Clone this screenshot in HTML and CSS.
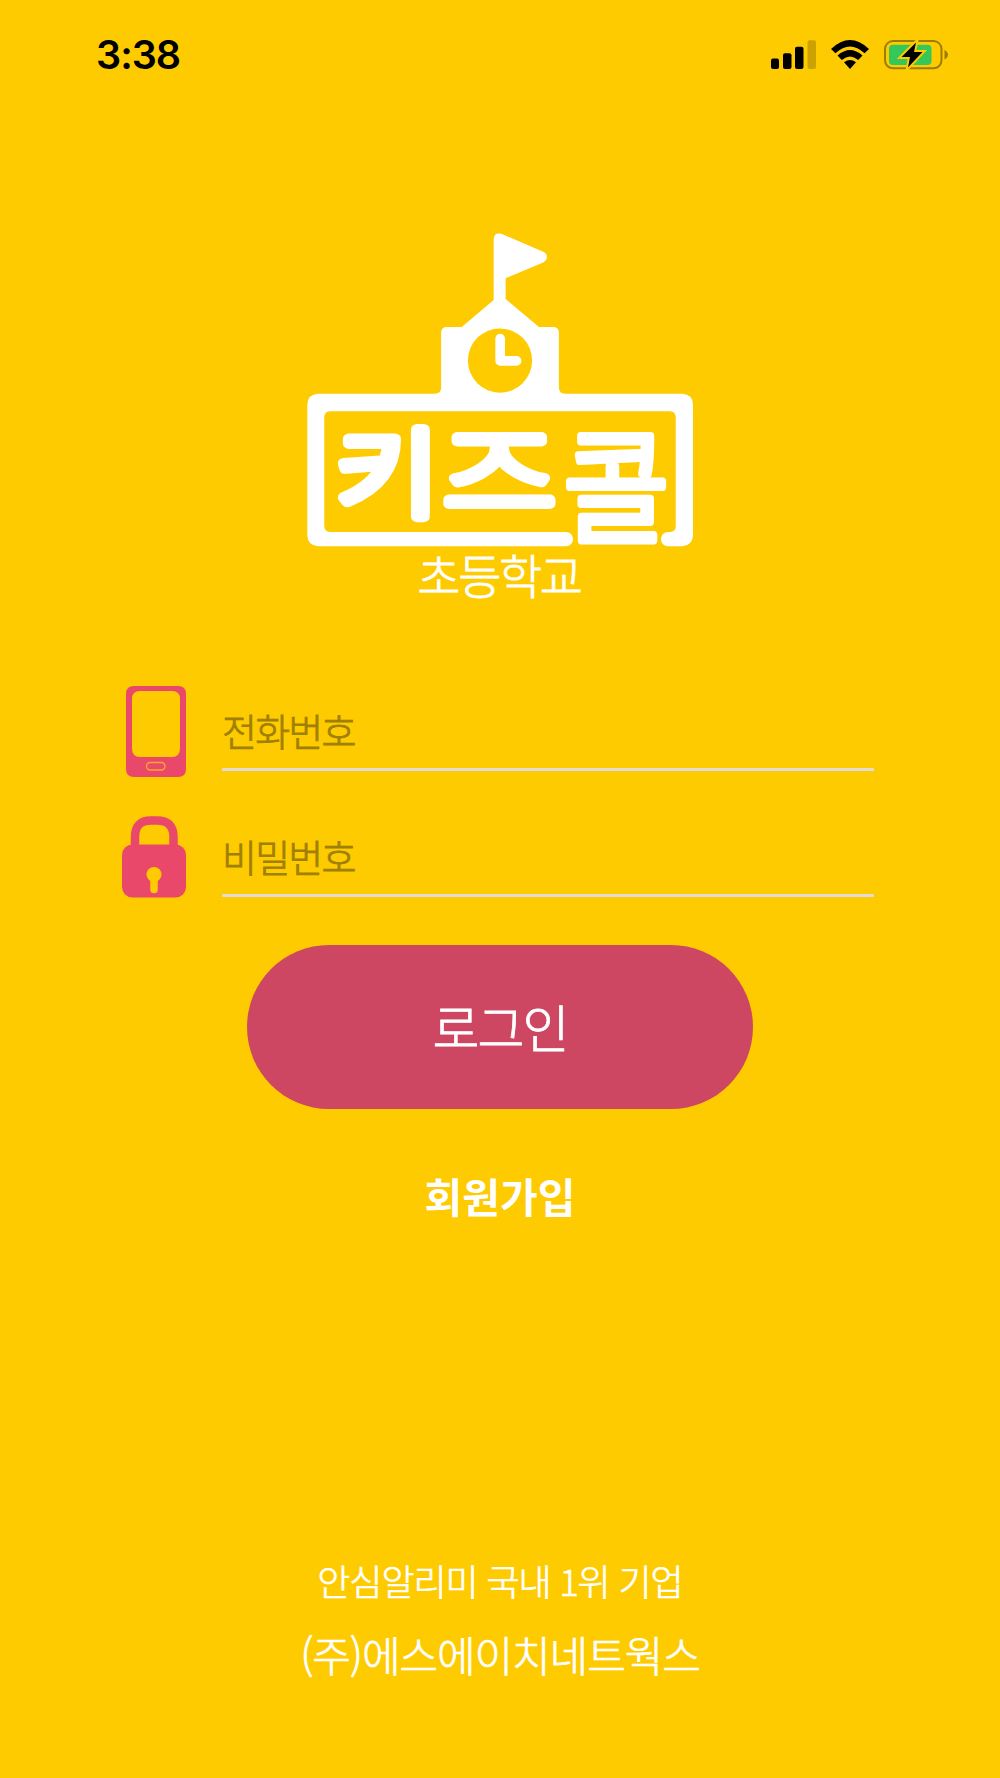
FILE: index.html
```
<!DOCTYPE html>
<html lang="ko">
<head>
<meta charset="UTF-8">
<meta name="viewport" content="width=device-width, initial-scale=1.0">
<title>키즈콜 로그인</title>
<link rel="stylesheet" href="styles.css">
</head>
<body>
<div class="screen">
    <header class="status-bar">
        <span class="time">3:38</span>
        <div class="status-icons">
            <svg class="signal" viewBox="0 0 45 30">
                <rect x="0" y="18.5" width="8" height="10.5" rx="2"/>
                <rect x="12" y="13.3" width="8.5" height="15.7" rx="2"/>
                <rect x="24" y="6.8" width="8.5" height="22.2" rx="2"/>
                <rect x="36.5" y="0.3" width="8.5" height="28.7" rx="2" opacity="0.2"/>
            </svg>
            <svg class="wifi" viewBox="0 0 38 30">
                <path d="M0 9 Q19 -9 38 9 L33.6 13.3 Q19 -0.4 4.4 13.3 Z"/>
                <path d="M6.5 15.6 Q19 4.6 31.5 15.6 L27.2 20 Q19 12.8 10.8 20 Z"/>
                <path d="M13 22.2 Q19 17.6 25 22.2 L19 29 Z"/>
            </svg>
            <svg class="battery" viewBox="0 0 65 30">
                <rect x="1" y="1" width="56.5" height="27.3" rx="8" fill="none" stroke="#9c7c05" stroke-width="2"/>
                <rect x="5" y="4.8" width="42.5" height="20.2" rx="4" fill="#35c759"/>
                <path d="M60.5 10 Q64 12 64 14.7 Q64 17.4 60.5 19.5 Z" fill="#9c7c05"/>
                <path d="M32 2.5 L17.5 17 H26 L24 27.5 L38.5 12 H30 Z" fill="#000" stroke="#fecb01" stroke-width="4" paint-order="stroke"/>
            </svg>
        </div>
    </header>

    <main class="login">
        <div class="brand">
            <svg class="logo" viewBox="50 40 1160 941" fill="#fff">
                <!-- flag and bell tower -->
                <path d="M611 240 V56 Q613 36 634 41 L758 94 Q771 99 771 111 Q771 122 758 128 L647 175 V237 L747 321 H789 Q807 321 807 339 V504 Q808 521 824 522 V560 H436 V522 Q453 520 453 504 V339 Q453 321 471 321 H515 Z"/>
                <circle cx="630" cy="422" r="96.5" fill="#fecb01"/>
                <path d="M630.5 356 V423 H680" fill="none" stroke="#fff" stroke-width="29" stroke-linecap="round" stroke-linejoin="round"/>
                <!-- sign board -->
                <path d="M83 522 H1178 Q1209 524 1210 554 V948 Q1208 978 1178 980 H1135 A21.5 21.5 0 0 1 1135 937 H1142 Q1158 936 1158 920 V591 Q1157 575 1141 574 H119 Q103 575 102 591 V920 Q103 936 119 937 H828 A21.5 21.5 0 0 1 828 980 H83 Q52 978 51 948 V554 Q52 524 83 522 Z"/>
                <g class="logo-text">
                    <text class="wide" transform="translate(135 867) scale(1 0.85)">키</text>
                    <text transform="translate(458 868) scale(1.09 0.87)">즈</text>
                    <text class="dense" transform="translate(820 941) scale(1.02 1.09)">콜</text>
                </g>
            </svg>
            <h1 class="subtitle">초등학교</h1>
        </div>

        <form class="login-form">
            <label class="field">
                <svg class="icon-phone" viewBox="0 0 60 91">
                    <path fill="#e9486a" fill-rule="evenodd" d="M8 0 H52 Q60 0 60 8 V83 Q60 91 52 91 H8 Q0 91 0 83 V8 Q0 0 8 0 Z M14 5 Q6 5 6 13 V62 Q6 71 14 71 H46 Q54 71 54 62 V13 Q54 5 46 5 Z"/>
                    <rect x="20.5" y="76.5" width="18.5" height="7.5" rx="3.7" fill="none" stroke="#fba72a" stroke-width="1.3"/>
                </svg>
                <input type="tel" placeholder="전화번호">
            </label>
            <label class="field">
                <svg class="icon-lock" viewBox="0 0 64 82">
                    <path d="M13 32 V21 Q13 4.5 29 4.5 H35 Q51.5 4.5 51.5 21 V32" fill="none" stroke="#e9486a" stroke-width="8.5"/>
                    <rect y="28.5" width="64" height="53" rx="10.5" fill="#e9486a"/>
                    <circle cx="32" cy="58.5" r="7.5" fill="#fecb01"/>
                    <path d="M32 60 V73.5" stroke="#fecb01" stroke-width="7.5" stroke-linecap="round"/>
                </svg>
                <input type="password" placeholder="비밀번호">
            </label>
            <button type="submit">로그인</button>
        </form>
        <a class="join" href="#">회원가입</a>
    </main>

    <footer class="company">
        <p class="slogan">안심알리미 국내 1위 기업</p>
        <p class="name">(주)에스에이치네트웍스</p>
    </footer>
</div>
</body>
</html>
```
FILE: styles.css
```
* {
    box-sizing: border-box;
}

body {
    margin: 0;
    background-color: #fecb01;
    font-family: "Noto Sans CJK KR", sans-serif;
    font-weight: 300;
    color: #fff;
}

.screen {
    width: 1000px;
    height: 1778px;
    display: flex;
    flex-direction: column;
    overflow: hidden;
}

.status-bar {
    height: 108px;
    padding: 2px 51px 0 96px;
    display: flex;
    align-items: center;
    justify-content: space-between;
}

.time {
    font-family: Inter, sans-serif;
    font-size: 39.5px;
    font-weight: 600;
    line-height: 48px;
    letter-spacing: -1px;
    color: #000;
}

.status-icons {
    display: flex;
    gap: 15px;
}

.status-icons svg {
    height: 30px;
}

.signal {
    width: 45px;
}

.wifi {
    width: 38px;
}

.battery {
    width: 65px;
}

.login {
    flex: 1;
    padding-top: 125px;
    display: flex;
    flex-direction: column;
    align-items: center;
}

.brand {
    display: flex;
    flex-direction: column;
    align-items: center;
}

.logo {
    display: block;
    width: 386px;
    height: 314px;
    overflow: visible;
}

.logo-text {
    font-size: 340px;
    font-weight: 300;
    stroke: #fff;
    stroke-width: 34px;
    stroke-linejoin: round;
}

.logo-text .wide {
    stroke-width: 39px;
}

.logo-text .dense {
    stroke-width: 22px;
}

.subtitle {
    margin: -3px 2px 0 0;
    font-size: 47px;
    font-weight: 300;
    line-height: 60px;
    letter-spacing: -2.4px;
    -webkit-text-stroke: 0.8px;
}

.login-form {
    width: 1000px;
    padding: 82px 126px 0 122px;
    display: flex;
    flex-direction: column;
    align-items: center;
}

.field {
    width: 100%;
    height: 126px;
    display: flex;
    align-items: flex-start;
}

.icon-phone {
    width: 60px;
    height: 91px;
    margin: 0 36px 0 4px;
}

.icon-lock {
    width: 64px;
    height: 82px;
    margin: 4px 36px 0 0;
}

input {
    flex: 1;
    height: 84px;
    margin-top: 1px;
    padding: 4px 0 0;
    border: none;
    border-bottom: 3px solid #e2dcd5;
    background: none;
    font-family: inherit;
    font-size: 38px;
    font-weight: 300;
    letter-spacing: -1.8px;
    outline: none;
}

input::placeholder {
    color: #9f7f04;
    -webkit-text-stroke: 0.8px;
}

button {
    width: 506px;
    height: 164px;
    margin: 7px 0 0 4px;
    padding: 0 0 3px;
    border: none;
    border-radius: 82px;
    background-color: #ce4762;
    color: #fff;
    font-family: inherit;
    font-size: 51px;
    font-weight: 300;
    letter-spacing: -2px;
    -webkit-text-stroke: 0.8px;
}

.join {
    margin-top: 56px;
    font-size: 41px;
    font-weight: 700;
    line-height: 60px;
    color: #fff;
    text-decoration: none;
}

.company {
    height: 227px;
    text-align: center;
    -webkit-text-stroke: 0.7px;
}

.company p {
    margin: 0;
}

.slogan {
    font-size: 36px;
    line-height: 58px;
    letter-spacing: -1.1px;
}

.name {
    font-size: 42px;
    line-height: 90px;
    letter-spacing: -1.1px;
}
```
